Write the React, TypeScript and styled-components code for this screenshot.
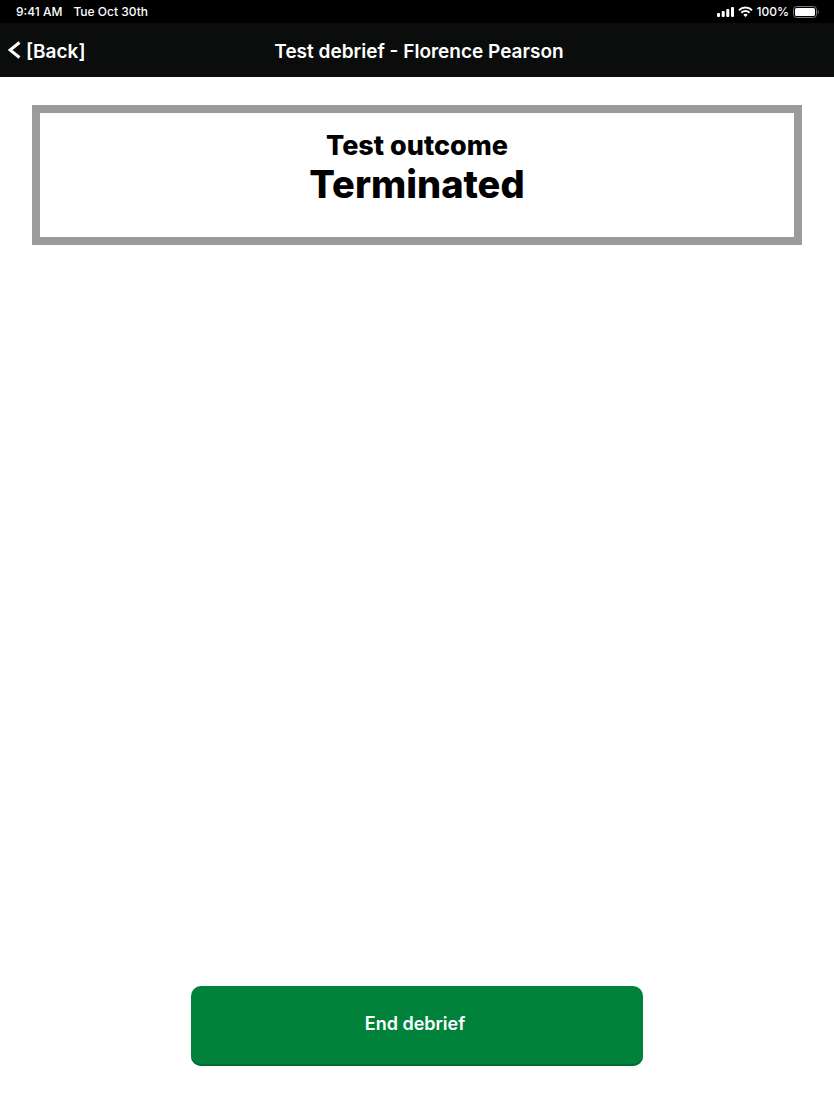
import React from 'react';
import styled, { createGlobalStyle } from 'styled-components';

const GlobalStyle = createGlobalStyle`
  * { box-sizing: border-box; }
  body { margin: 0; background: #fff; font-family: Inter, "Liberation Sans", sans-serif; }
`;
const Screen = styled.div`
  min-height: 100vh;
  display: flex;
  flex-direction: column;
`;
const StatusBar = styled.div`
  height: 23px;
  padding: 0 15px 0 16px;
  display: flex;
  align-items: center;
  justify-content: space-between;
  background: #000;
  color: #fff;
  font-size: 12px;
  line-height: 23px;
  font-weight: 500;
`;
const Group = styled.div<{ $gap: number }>`
  display: flex;
  align-items: center;
  gap: ${({ $gap }) => $gap}px;
`;
const NavBar = styled.header`
  height: 54px;
  padding: 4px 8px 0;
  display: grid;
  grid-template-columns: 1fr auto 1fr;
  align-items: center;
  background: #0b0d0c;
  color: #fff;
`;
const BackLink = styled.a`
  display: flex;
  align-items: flex-start;
  gap: 5px;
  color: inherit;
  text-decoration: none;
  font-size: 19px;
  line-height: 24px;
  font-weight: 600;
`;
const Title = styled.h1`
  margin: 0;
  padding-left: 4px;
  font-size: 19px;
  line-height: 24px;
  font-weight: 600;
`;
const Content = styled.main`
  flex: 1;
  display: flex;
  flex-direction: column;
  padding: 28px 32px 46px;
`;
const Outcome = styled.section`
  border: 8px solid #9b9b9b;
  padding: 16px 16px 32px;
  text-align: center;
`;
const OutcomeLabel = styled.h2`
  margin: 0;
  font-size: 27px;
  line-height: 34px;
  font-weight: 800;
`;
const OutcomeValue = styled.p`
  margin: 0;
  font-size: 38px;
  line-height: 42px;
  font-weight: 800;
`;
const EndButton = styled.button`
  width: 60%;
  max-width: 452px;
  height: 80px;
  margin: auto auto 0;
  padding: 0 4px 4px 0;
  border: 0;
  border-radius: 10px;
  box-shadow: inset 0 -2px 0 #006b32;
  background: #00823b;
  color: #fff;
  font: 600 18px/24px Inter, "Liberation Sans", sans-serif;
`;

export default function App() {
  return (
    <Screen>
      <GlobalStyle />
      <StatusBar>
        <Group $gap={11}><span>9:41 AM</span><span>Tue Oct 30th</span></Group>
        <Group $gap={4}>
          <svg width="17" height="12" viewBox="0 0 17 12" fill="#fff" aria-hidden="true">
            <rect x="0" y="7" width="3" height="4" rx="1" />
            <rect x="4.7" y="5" width="3" height="6" rx="1" />
            <rect x="9.3" y="3" width="3" height="8" rx="1" />
            <rect x="14" y="1" width="3" height="10" rx="1" />
          </svg>
          <svg width="15" height="12" viewBox="0 0 15 12" fill="none" stroke="#fff" strokeWidth="2" aria-hidden="true">
            <path d="M1 4.2a9.3 9.3 0 0 1 13 0M3.4 6.8a5.8 5.8 0 0 1 8.2 0" />
            <path d="M7.5 11 5.3 8.8a3.1 3.1 0 0 1 4.4 0Z" fill="#fff" stroke="none" />
          </svg>
          <span>100%</span>
          <svg width="26" height="12" viewBox="0 0 26 12" aria-hidden="true">
            <rect x=".5" y=".5" width="23" height="11" rx="3" fill="none" stroke="#777" />
            <rect x="2" y="2" width="20" height="8" rx="1.6" fill="#fff" />
            <path d="M24.7 4v4c1.4-.6 1.4-3.4 0-4Z" fill="#777" />
          </svg>
        </Group>
      </StatusBar>
      <NavBar>
        <BackLink href="#">
          <svg width="13" height="20" viewBox="0 0 13 20" fill="none" stroke="#fff" strokeWidth="3" aria-hidden="true">
            <path d="M11.5 2.5 2 10l9.5 7.5" />
          </svg>
          <span>[Back]</span>
        </BackLink>
        <Title>Test debrief - Florence Pearson</Title>
      </NavBar>
      <Content>
        <Outcome>
          <OutcomeLabel>Test outcome</OutcomeLabel>
          <OutcomeValue>Terminated</OutcomeValue>
        </Outcome>
        <EndButton type="button">End debrief</EndButton>
      </Content>
    </Screen>
  );
}
